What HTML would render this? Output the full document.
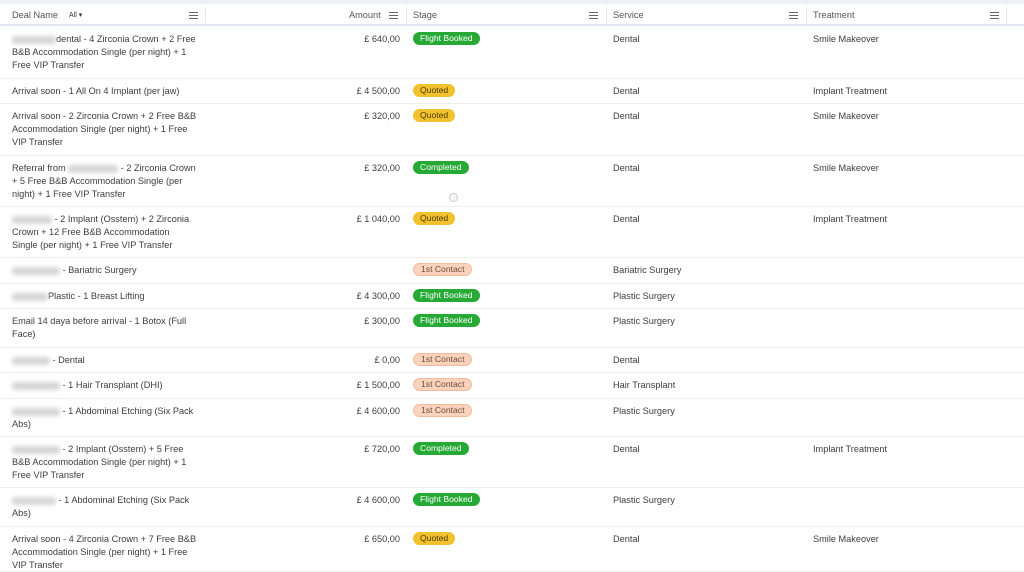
<!DOCTYPE html>
<html><head><meta charset="utf-8"><style>
*{margin:0;padding:0;box-sizing:border-box}
body{width:1024px;height:566px;overflow:hidden;background:#fff;font-family:"Liberation Sans",sans-serif;font-size:9.2px;color:#3d3d3d;position:relative}
.top{position:absolute;left:0;top:0;width:1024px;height:4px;background:#eef1f6}
.hdr{position:absolute;left:0;top:4px;width:1024px;height:22px;border-bottom:2px solid #e3e8f0;color:#555}
.hdr span{position:absolute;top:6px}
.sep{position:absolute;top:3px;width:1px;height:16px;background:#e6e6e6}
.ham{position:absolute;top:8px;width:9px;height:7px;border-top:1px solid #666;border-bottom:1px solid #666}
.ham:after{content:"";position:absolute;left:0;top:2px;width:9px;height:1px;background:#666}
.row{position:absolute;left:0;width:1024px;border-bottom:1px solid #eeeeee}
.row div{position:absolute;top:6px;line-height:13px}
.d{left:12px;width:186px}
.a{right:624px;text-align:right}
.s{left:413px;top:5px!important}
.sv{left:613px}
.t{left:813px}
.b{display:inline-block;height:13px;line-height:13px;padding:0 7px;border-radius:7px;font-size:8.6px}
.fb{background:#27a935;color:#fff}
.q{background:#f2c12e;color:#4a3b00}
.c{background:#27a935;color:#fff}
.fc{background:#fbd3bd;color:#6b4a3a;border:1px solid #f0bca0;line-height:11px}
.bl{display:inline-block;height:8px;background:#d6d6d6;filter:blur(2px);vertical-align:middle;border-radius:3px}
</style></head><body>
<div class="top"></div>
<div class="hdr">
<span style="left:12px">Deal Name</span><span style="left:69px;font-size:7px;top:7px;color:#333">All ▾</span>
<i class="ham" style="left:189px"></i><i class="sep" style="left:205px"></i>
<span style="left:349px">Amount</span><i class="ham" style="left:389px"></i><i class="sep" style="left:406px"></i>
<span style="left:413px">Stage</span><i class="ham" style="left:589px"></i><i class="sep" style="left:606px"></i>
<span style="left:613px">Service</span><i class="ham" style="left:789px"></i><i class="sep" style="left:806px"></i>
<span style="left:813px">Treatment</span><i class="ham" style="left:990px"></i><i class="sep" style="left:1006px"></i>
</div>

<div class="row" style="top:27px;height:52px"><div class="d"><span class="bl" style="width:44px"></span>dental - 4 Zirconia Crown + 2 Free B&amp;B Accommodation Single (per night) + 1 Free VIP Transfer</div><div class="a">£ 640,00</div><div class="s"><span class="b fb">Flight Booked</span></div><div class="sv">Dental</div><div class="t">Smile Makeover</div></div>
<div class="row" style="top:79px;height:25px"><div class="d">Arrival soon - 1 All On 4 Implant (per jaw)</div><div class="a">£ 4 500,00</div><div class="s"><span class="b q">Quoted</span></div><div class="sv">Dental</div><div class="t">Implant Treatment</div></div>
<div class="row" style="top:104px;height:52px"><div class="d">Arrival soon - 2 Zirconia Crown + 2 Free B&amp;B Accommodation Single (per night) + 1 Free VIP Transfer</div><div class="a">£ 320,00</div><div class="s"><span class="b q">Quoted</span></div><div class="sv">Dental</div><div class="t">Smile Makeover</div></div>
<div class="row" style="top:156px;height:51px"><div class="d">Referral from <span class="bl" style="width:50px"></span> - 2 Zirconia Crown + 5 Free B&amp;B Accommodation Single (per night) + 1 Free VIP Transfer</div><div class="a">£ 320,00</div><div class="s"><span class="b c">Completed</span></div><div class="sv">Dental</div><div class="t">Smile Makeover</div></div>
<div class="row" style="top:207px;height:51px"><div class="d" style="width:180px"><span class="bl" style="width:40px"></span> - 2 Implant (Osstem) + 2 Zirconia Crown + 12 Free B&amp;B Accommodation Single (per night) + 1 Free VIP Transfer</div><div class="a">£ 1 040,00</div><div class="s"><span class="b q">Quoted</span></div><div class="sv">Dental</div><div class="t">Implant Treatment</div></div>
<div class="row" style="top:258px;height:26px"><div class="d"><span class="bl" style="width:48px"></span> - Bariatric Surgery</div><div class="s"><span class="b fc">1st Contact</span></div><div class="sv">Bariatric Surgery</div></div>
<div class="row" style="top:284px;height:25px"><div class="d"><span class="bl" style="width:36px"></span>Plastic - 1 Breast Lifting</div><div class="a">£ 4 300,00</div><div class="s"><span class="b fb">Flight Booked</span></div><div class="sv">Plastic Surgery</div></div>
<div class="row" style="top:309px;height:39px"><div class="d">Email 14 daya before arrival - 1 Botox (Full Face)</div><div class="a">£ 300,00</div><div class="s"><span class="b fb">Flight Booked</span></div><div class="sv">Plastic Surgery</div></div>
<div class="row" style="top:348px;height:25px"><div class="d"><span class="bl" style="width:38px"></span> - Dental</div><div class="a">£ 0,00</div><div class="s"><span class="b fc">1st Contact</span></div><div class="sv">Dental</div></div>
<div class="row" style="top:373px;height:26px"><div class="d"><span class="bl" style="width:48px"></span> - 1 Hair Transplant (DHI)</div><div class="a">£ 1 500,00</div><div class="s"><span class="b fc">1st Contact</span></div><div class="sv">Hair Transplant</div></div>
<div class="row" style="top:399px;height:38px"><div class="d"><span class="bl" style="width:48px"></span> - 1 Abdominal Etching (Six Pack Abs)</div><div class="a">£ 4 600,00</div><div class="s"><span class="b fc">1st Contact</span></div><div class="sv">Plastic Surgery</div></div>
<div class="row" style="top:437px;height:51px"><div class="d"><span class="bl" style="width:48px"></span> - 2 Implant (Osstem) + 5 Free B&amp;B Accommodation Single (per night) + 1 Free VIP Transfer</div><div class="a">£ 720,00</div><div class="s"><span class="b c">Completed</span></div><div class="sv">Dental</div><div class="t">Implant Treatment</div></div>
<div class="row" style="top:488px;height:39px"><div class="d"><span class="bl" style="width:44px"></span> - 1 Abdominal Etching (Six Pack Abs)</div><div class="a">£ 4 600,00</div><div class="s"><span class="b fb">Flight Booked</span></div><div class="sv">Plastic Surgery</div></div>
<div class="row" style="top:527px;height:45px"><div class="d">Arrival soon - 4 Zirconia Crown + 7 Free B&amp;B Accommodation Single (per night) + 1 Free VIP Transfer</div><div class="a">£ 650,00</div><div class="s"><span class="b q">Quoted</span></div><div class="sv">Dental</div><div class="t">Smile Makeover</div></div>
<div style="position:absolute;left:449px;top:193px;width:9px;height:9px;border-radius:50%;border:1px solid #ccc;background:#f4f4f4"></div>
</body></html>
